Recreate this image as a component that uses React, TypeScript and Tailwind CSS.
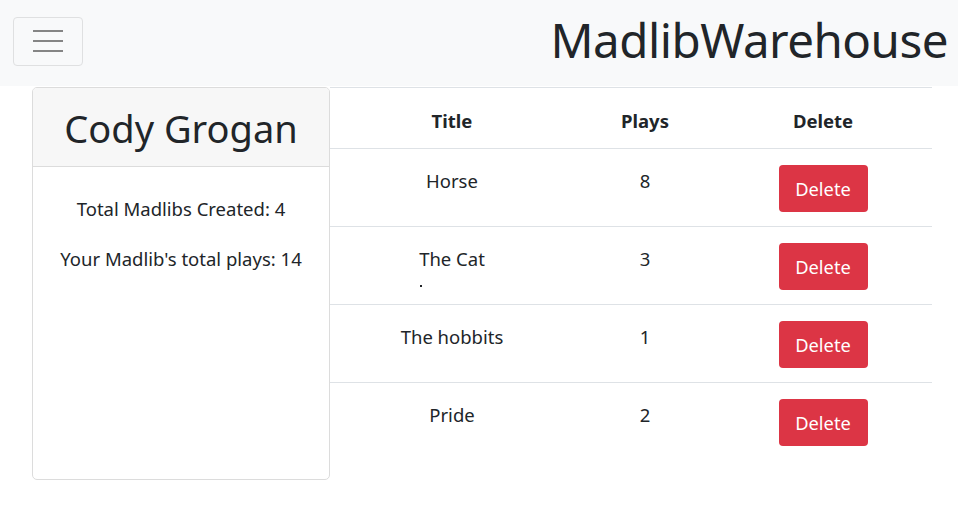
const rows = [
  { title: "Horse", plays: 8 },
  { title: "The Cat", plays: 3, dot: true },
  { title: "The hobbits", plays: 1 },
  { title: "Pride", plays: 2 },
];

export default function App() {
  return (
    <div className="min-h-[523px] bg-white text-[#212529]" style={{ fontFamily: '"Noto Sans", "Open Sans", sans-serif' }}>
      <nav className="flex h-[86px] items-center justify-between bg-[#f8f9fa] pl-[13px] pr-[10px]">
        <button className="mb-[4px] flex h-[49px] w-[70px] flex-col items-center justify-center gap-[8px] rounded-[4px] border border-[#dfe0e1]">
          <span className="block h-[2px] w-[30px] bg-[#858585]" />
          <span className="block h-[2px] w-[30px] bg-[#858585]" />
          <span className="block h-[2px] w-[30px] bg-[#858585]" />
        </button>
        <span className="mb-[6px] text-[47.5px] leading-none tracking-[-0.5px]">MadlibWarehouse</span>
      </nav>

      <div className="flex items-start pl-[32px] pr-[26px] pt-[1px]">
        <div className="h-[393px] w-[298px] shrink-0 overflow-hidden rounded-[5px] border border-[#dcdcdc]">
          <div className="flex h-[79px] items-center justify-center border-b border-[#dcdcdc] bg-[#f7f7f7]">
            <h1 className="mt-[2px] text-[38px] leading-none">Cody Grogan</h1>
          </div>
          <div className="pt-[28px] text-center text-[18.5px] leading-[27px]">
            <p className="mb-[23px]">Total Madlibs Created: 4</p>
            <p>Your Madlib's total plays: 14</p>
          </div>
        </div>

        <table className="w-[602px] border-collapse border-t border-[#dee2e6] text-center text-[18.5px]">
          <thead>
            <tr className="h-[61px] border-b border-[#dee2e6]">
              <th className="w-[244px] p-0 pt-[5px] font-bold">Title</th>
              <th className="w-[142px] p-0 pt-[5px] font-bold">Plays</th>
              <th className="w-[216px] p-0 pt-[5px] pr-[2px] font-bold">Delete</th>
            </tr>
          </thead>
          <tbody>
            {rows.map((r, i) => (
              <tr key={r.title} className={i < rows.length - 1 ? "h-[78px] border-b border-[#dee2e6]" : "h-[78px]"}>
                <td className="relative p-0 pt-[19px] align-top leading-[26px]">
                  {r.title}
                  {r.dot && <span className="absolute left-[90px] top-[58px] block h-[2px] w-[2px] bg-[#212529]" />}
                </td>
                <td className="p-0 pt-[19px] align-top leading-[26px]">{r.plays}</td>
                <td className="p-0 pt-[16px] pr-[2px] align-top">
                  <button className="mx-auto block h-[47px] w-[89px] rounded-[4px] bg-[#dc3545] pt-[2px] text-[18.3px] leading-none text-white">
                    Delete
                  </button>
                </td>
              </tr>
            ))}
          </tbody>
        </table>
      </div>
    </div>
  );
}
